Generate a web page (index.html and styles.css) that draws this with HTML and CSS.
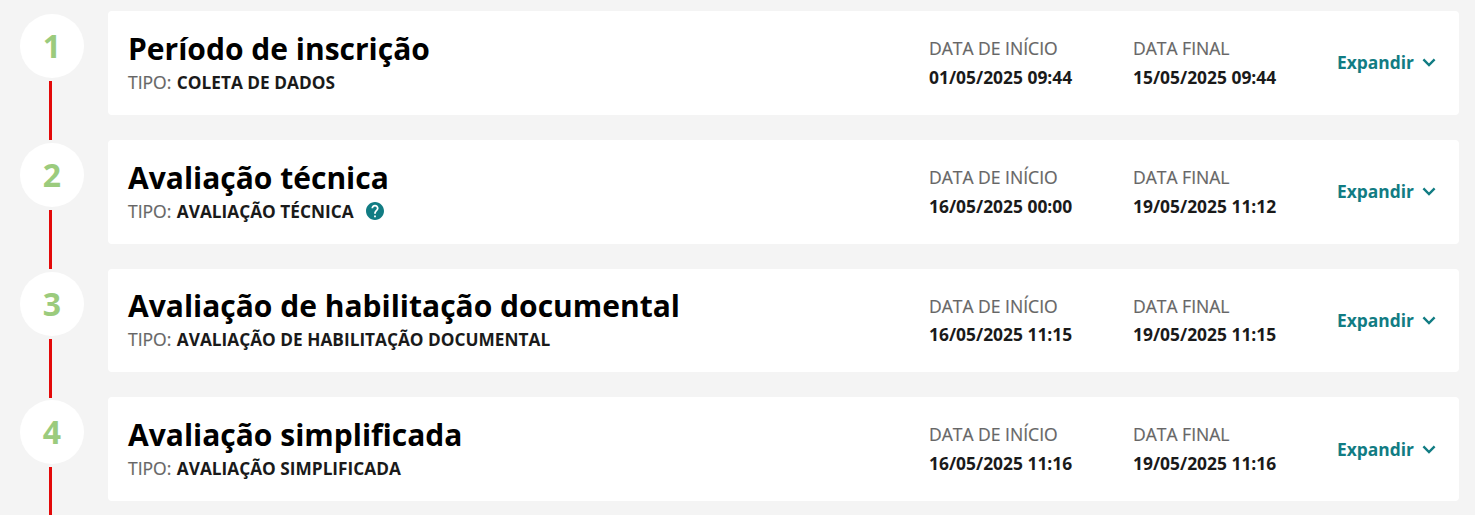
FILE: index.html
```html
<!DOCTYPE html>
<html lang="pt-BR">
<head>
<meta charset="utf-8">
<title>Fases</title>
<link rel="stylesheet" href="styles.css">
</head>
<body>
<ol class="timeline">
<li class="step">
  <div class="rail"><span class="number">1</span><span class="line"></span></div>
  <section class="card">
    <div class="info"><h2 class="title">Período de inscrição</h2><p class="type"><span>TIPO:</span> <b>COLETA DE DADOS</b></p></div>
    <div class="date"><span>DATA DE INÍCIO</span><b>01/05/2025 09:44</b></div>
    <div class="date"><span>DATA FINAL</span><b>15/05/2025 09:44</b></div>
    <a class="expand">Expandir <svg class="chevron" viewBox="0 0 14 9"><path d="M1.4 1.4 7 7l5.6-5.6"/></svg></a>
  </section>
</li>
<li class="step">
  <div class="rail"><span class="number">2</span><span class="line"></span></div>
  <section class="card">
    <div class="info"><h2 class="title">Avaliação técnica</h2><p class="type"><span>TIPO:</span> <b>AVALIAÇÃO TÉCNICA</b><svg class="help" viewBox="2 2 20 20"><path d="M12 2C6.48 2 2 6.48 2 12s4.48 10 10 10 10-4.48 10-10S17.52 2 12 2zm1 17h-2v-2h2v2zm2.07-7.75-.9.92C13.45 12.9 13 13.5 13 15h-2v-.5c0-1.1.45-2.1 1.17-2.83l1.24-1.26c.37-.36.59-.86.59-1.41 0-1.1-.9-2-2-2s-2 .9-2 2H8c0-2.21 1.79-4 4-4s4 1.79 4 4c0 .88-.36 1.68-.93 2.25z"/></svg></p></div>
    <div class="date"><span>DATA DE INÍCIO</span><b>16/05/2025 00:00</b></div>
    <div class="date"><span>DATA FINAL</span><b>19/05/2025 11:12</b></div>
    <a class="expand">Expandir <svg class="chevron" viewBox="0 0 14 9"><path d="M1.4 1.4 7 7l5.6-5.6"/></svg></a>
  </section>
</li>
<li class="step">
  <div class="rail"><span class="number">3</span><span class="line"></span></div>
  <section class="card">
    <div class="info"><h2 class="title">Avaliação de habilitação documental</h2><p class="type"><span>TIPO:</span> <b>AVALIAÇÃO DE HABILITAÇÃO DOCUMENTAL</b></p></div>
    <div class="date"><span>DATA DE INÍCIO</span><b>16/05/2025 11:15</b></div>
    <div class="date"><span>DATA FINAL</span><b>19/05/2025 11:15</b></div>
    <a class="expand">Expandir <svg class="chevron" viewBox="0 0 14 9"><path d="M1.4 1.4 7 7l5.6-5.6"/></svg></a>
  </section>
</li>
<li class="step">
  <div class="rail"><span class="number">4</span><span class="line"></span></div>
  <section class="card">
    <div class="info"><h2 class="title">Avaliação simplificada</h2><p class="type"><span>TIPO:</span> <b>AVALIAÇÃO SIMPLIFICADA</b></p></div>
    <div class="date"><span>DATA DE INÍCIO</span><b>16/05/2025 11:16</b></div>
    <div class="date"><span>DATA FINAL</span><b>19/05/2025 11:16</b></div>
    <a class="expand">Expandir <svg class="chevron" viewBox="0 0 14 9"><path d="M1.4 1.4 7 7l5.6-5.6"/></svg></a>
  </section>
</li>
</ol>
</body>
</html>
```
FILE: styles.css
```css
* { box-sizing: border-box; }
body { margin: 0; height: 515px; overflow: hidden; background: #f4f4f4; font-family: "Open Sans", "Noto Sans", sans-serif; color: #1a1a1a; }
.timeline { list-style: none; margin: 0; padding: 11px 16px 0 20px; }
.step { display: grid; grid-template-columns: 64px 1fr; column-gap: 24px; height: 128.75px; }
.rail { display: flex; flex-direction: column; align-items: center; padding-top: 3px; }
.number { width: 64px; height: 64px; flex: none; border-radius: 50%; background: #fff; color: #9bcb7d; font-size: 32px; font-weight: 700; line-height: 63.4px; text-align: center; }
.line { width: 3px; height: 59px; margin: 3px 3px 0 0; background: #e30909; flex: none; }
.card { height: 103.8px; display: grid; grid-template-columns: 1fr 204px 204px 99px; align-items: center; padding: 0 23px 0 20px; background: #fff; border-radius: 4px; }
.title { margin: -3px 0 2px; font-size: 30px; line-height: 40px; font-weight: 700; color: #000; white-space: nowrap; }
.type { margin: 0; display: flex; align-items: center; gap: 5.5px; font-size: 17.5px; line-height: 23px; }
.type span, .date span { color: #666; font-size: 17.55px; -webkit-text-stroke: 0.2px #666; }
.type b { font-size: 17.25px; font-weight: 700; }
.date b { font-weight: 700; }
.help { width: 18px; height: 18px; margin-left: 7px; fill: #117c83; }
.date { display: flex; flex-direction: column; font-size: 17.4px; line-height: 28.7px; white-space: nowrap; }
.expand { display: flex; align-items: center; justify-content: space-between; padding-bottom: 1px; color: #117c83; font-size: 17.4px; font-weight: 700; line-height: 24px; }
.chevron { width: 14px; height: 9px; margin-top: 1px; fill: none; stroke: #117c83; stroke-width: 2.4; }
```
